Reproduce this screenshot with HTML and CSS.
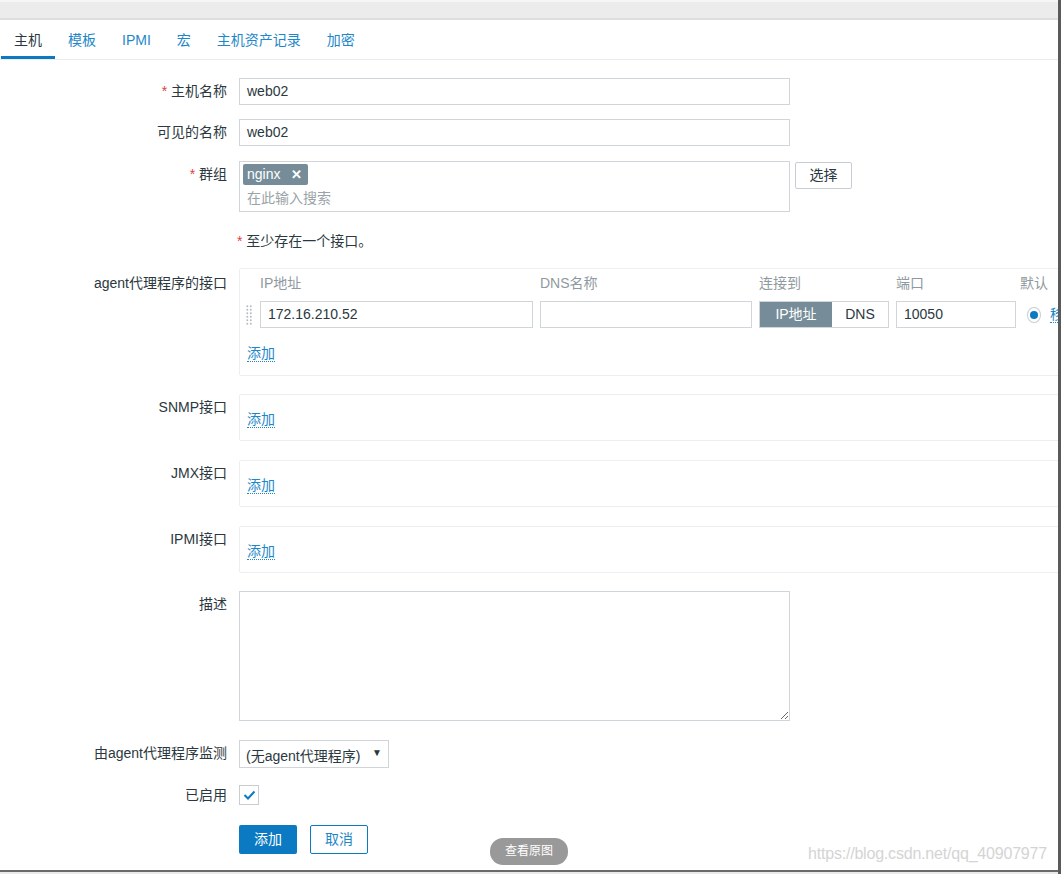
FILE: index.html
```html
<!DOCTYPE html>
<html lang="zh">
<head>
<meta charset="utf-8">
<title>主机</title>
<link rel="stylesheet" href="styles.css">
</head>
<body>
<div class="frame">
  <div class="topstrip"></div>
  <ul class="tabs">
    <li class="tab active">主机</li>
    <li class="tab">模板</li>
    <li class="tab">IPMI</li>
    <li class="tab">宏</li>
    <li class="tab">主机资产记录</li>
    <li class="tab">加密</li>
  </ul>

  <div class="form">
    <div class="row r1">
      <div class="lbl"><span class="req">*</span> 主机名称</div>
      <div class="field"><div class="input w551">web02</div></div>
    </div>
    <div class="row r2">
      <div class="lbl">可见的名称</div>
      <div class="field"><div class="input w551">web02</div></div>
    </div>
    <div class="row r3">
      <div class="lbl"><span class="req">*</span> 群组</div>
      <div class="field flexrow">
        <div class="multi">
          <span class="tag">nginx <span class="tagx">✕</span></span>
          <div class="placeholder">在此输入搜索</div>
        </div>
        <div class="btn-grey">选择</div>
      </div>
    </div>
    <div class="row r4">
      <div class="lbl"></div>
      <div class="field hint"><span class="req">*</span> 至少存在一个接口。</div>
    </div>
    <div class="row r5">
      <div class="lbl lbl-agent">agent代理程序的接口</div>
      <div class="field">
        <div class="ibox agent">
          <div class="igrid">
            <div></div>
            <div class="ih">IP地址</div>
            <div class="ih">DNS名称</div>
            <div class="ih">连接到</div>
            <div class="ih">端口</div>
            <div class="ih ih-def">默认</div>
            <div></div>
            <div class="handle">
              <svg width="8" height="24" viewBox="0 0 8 24"><g fill="#b3bcc1"><circle cx="1.5" cy="2" r="1.1"/><circle cx="5.5" cy="2" r="1.1"/><circle cx="1.5" cy="6" r="1.1"/><circle cx="5.5" cy="6" r="1.1"/><circle cx="1.5" cy="10" r="1.1"/><circle cx="5.5" cy="10" r="1.1"/><circle cx="1.5" cy="14" r="1.1"/><circle cx="5.5" cy="14" r="1.1"/><circle cx="1.5" cy="18" r="1.1"/><circle cx="5.5" cy="18" r="1.1"/><circle cx="1.5" cy="22" r="1.1"/><circle cx="5.5" cy="22" r="1.1"/></g></svg>
            </div>
            <div class="input">172.16.210.52</div>
            <div class="input"></div>
            <div class="toggle"><span class="t-on">IP地址</span><span class="t-off">DNS</span></div>
            <div class="input">10050</div>
            <div class="radiocell"><span class="radio"><span class="dot"></span></span></div>
            <div class="link remove">移除</div>
          </div>
          <div class="addlink"><span class="link">添加</span></div>
        </div>
      </div>
    </div>
    <div class="row r6">
      <div class="lbl">SNMP接口</div>
      <div class="field"><div class="ibox small"><span class="link">添加</span></div></div>
    </div>
    <div class="row r7">
      <div class="lbl">JMX接口</div>
      <div class="field"><div class="ibox small"><span class="link">添加</span></div></div>
    </div>
    <div class="row r7">
      <div class="lbl">IPMI接口</div>
      <div class="field"><div class="ibox small"><span class="link">添加</span></div></div>
    </div>
    <div class="row r8">
      <div class="lbl">描述</div>
      <div class="field"><textarea class="textarea"></textarea></div>
    </div>
    <div class="row r9">
      <div class="lbl">由agent代理程序监测</div>
      <div class="field"><div class="select">(无agent代理程序)<span class="caret">▼</span></div></div>
    </div>
    <div class="row r10">
      <div class="lbl lbl-chk">已启用</div>
      <div class="field">
        <span class="checkbox"><svg width="13" height="10" viewBox="0 0 13 10"><path d="M1.5 5 L5 8.5 L11.5 1.5" fill="none" stroke="#0b7ac2" stroke-width="2"/></svg></span>
      </div>
    </div>
    <div class="row r11">
      <div class="lbl"></div>
      <div class="field flexrow">
        <div class="btn-main">添加</div>
        <div class="btn-alt">取消</div>
      </div>
    </div>
  </div>

  <div class="viewpill">查看原图</div>
  <div class="watermark">https://blog.csdn.net/qq_40907977</div>
  <div class="bottomedge"></div>
</div>
</body>
</html>
```

FILE: styles.css
```css
* { box-sizing: border-box; }
html, body { margin: 0; padding: 0; }
body {
  font-family: "Liberation Sans", "Noto Sans CJK SC", sans-serif;
  font-size: 14px;
  color: #2b3840;
  background: #fff;
  overflow: hidden;
}
.frame {
  position: relative;
  width: 1061px;
  height: 874px;
  overflow: hidden;
  border-right: 3px solid #5a5a5a;
}
.topstrip {
  height: 20px;
  background: #ececec;
  border-top: 2px solid #f6f6f6;
  border-bottom: 2px solid #dedede;
}
.tabs {
  list-style: none;
  margin: 0;
  padding: 0 0 0 1px;
  display: flex;
  height: 40px;
  border-bottom: 1px solid #ebebeb;
}
.tab {
  padding: 12px 13px 0;
  line-height: 16px;
  color: #1e87c8;
  border-bottom: 3px solid transparent;
}
.tab.active {
  color: #2b3840;
  border-bottom-color: #0b7ac2;
}
.form { padding-top: 18px; }
.row { display: flex; align-items: flex-start; }
.lbl {
  width: 239px;
  flex: none;
  padding-right: 12px;
  text-align: right;
  line-height: 27px;
  white-space: nowrap;
}
.lbl-agent { padding-top: 2px; }
.lbl-chk { line-height: 22px; }
.req { color: #e0403c; }
.field { flex: none; }
.flexrow { display: flex; align-items: flex-start; }
.r2 { margin-top: 14px; }
.r3 { margin-top: 15px; }
.r4 { margin-top: 16px; }
.r5 { margin-top: 13px; }
.r6 { margin-top: 18px; }
.r7 { margin-top: 19px; }
.r8 { margin-top: 18px; }
.r9 { margin-top: 19px; }
.r10 { margin-top: 16px; }
.r11 { margin-top: 19px; }

.input {
  height: 27px;
  border: 1px solid #cfd5d9;
  background: #fff;
  padding: 0 7px;
  line-height: 25px;
  color: #2b3840;
}
.w551 { width: 551px; }
.multi {
  width: 551px;
  height: 51px;
  border: 1px solid #cfd5d9;
  padding: 2px 3px;
}
.tag {
  display: inline-block;
  height: 21px;
  line-height: 21px;
  background: #768d99;
  color: #fff;
  padding: 0 6px 0 4px;
  border-radius: 2px;
  font-size: 14px;
}
.tagx { font-weight: bold; margin-left: 7px; font-size: 13px; }
.placeholder {
  margin-top: 5px;
  padding-left: 4px;
  line-height: 16px;
  color: #9aa3a8;
}
.btn-grey {
  margin-left: 5px;
  margin-top: 1px;
  width: 57px;
  height: 27px;
  border: 1px solid #c7cdd1;
  border-radius: 2px;
  text-align: center;
  line-height: 25px;
  background: #fff;
}
.hint { line-height: 27px; margin-left: -2px; }

.ibox {
  width: 840px;
  border: 1px solid #eceff1;
  border-radius: 2px;
}
.agent {
  height: 108px;
  padding: 6px 0 0 6px;
}
.igrid {
  display: grid;
  grid-template-columns: 7px 273px 212px 130px 120px 18px 40px;
  column-gap: 7px;
  row-gap: 10px;
  align-items: center;
}
.ih { line-height: 16px; color: #8f9aa0; }
.ih-def { margin-left: -3px; white-space: nowrap; }
.handle { height: 27px; display: flex; align-items: center; }
.handle svg { display: block; }
.toggle {
  display: flex;
  height: 27px;
  border: 1px solid #cfd5d9;
}
.t-on {
  width: 72px;
  background: #768d99;
  color: #fff;
  text-align: center;
  line-height: 25px;
}
.t-off {
  flex: 1;
  text-align: center;
  line-height: 25px;
}
.radiocell { display: flex; align-items: center; height: 27px; }
.radio {
  width: 16px;
  height: 16px;
  border-radius: 50%;
  border: 1px solid #c7cdd1;
  display: flex;
  align-items: center;
  justify-content: center;
  margin-left: 4px;
}
.dot { width: 8px; height: 8px; border-radius: 50%; background: #0b7ac2; }
.remove { margin-left: 2px; }
.link {
  color: #1e87c8;
  border-bottom: 1px dotted #1e87c8;
  line-height: 16px;
  display: inline-block;
}
.addlink { margin-top: 17px; padding-left: 1px; }
.small {
  height: 47px;
  padding: 16px 0 0 7px;
}
.textarea {
  display: block;
  width: 551px;
  height: 130px;
  border: 1px solid #cfd5d9;
  margin: 0;
  font: inherit;
}
.select {
  width: 150px;
  height: 28px;
  border: 1px solid #cfd5d9;
  padding: 0 0 0 6px;
  line-height: 30px;
  white-space: nowrap;
  position: relative;
}
.caret {
  position: absolute;
  right: 6px;
  top: 0;
  font-size: 10px;
  line-height: 24px;
  color: #2b3840;
}
.checkbox {
  display: flex;
  width: 20px;
  height: 20px;
  border: 1px solid #c7cdd1;
  align-items: center;
  justify-content: center;
  margin-top: 1px;
}
.btn-main {
  width: 58px;
  height: 29px;
  background: #0b7ac2;
  color: #fff;
  text-align: center;
  line-height: 29px;
  border-radius: 2px;
}
.btn-alt {
  margin-left: 13px;
  width: 58px;
  height: 29px;
  border: 1px solid #0b7ac2;
  color: #1e87c8;
  text-align: center;
  line-height: 27px;
  border-radius: 2px;
}
.viewpill {
  position: absolute;
  left: 490px;
  top: 838px;
  width: 78px;
  height: 27px;
  border-radius: 13px;
  background: #999;
  color: #fff;
  font-size: 12px;
  text-align: center;
  line-height: 27px;
}
.watermark {
  position: absolute;
  left: 808px;
  top: 845px;
  font-size: 16px;
  letter-spacing: -0.2px;
  color: #d4d4d4;
  white-space: nowrap;
}
.bottomedge {
  position: absolute;
  left: 0;
  right: 0;
  top: 870px;
  height: 4px;
  background: #eaeaea;
  border-top: 2px solid #6a6a6a;
}
```
